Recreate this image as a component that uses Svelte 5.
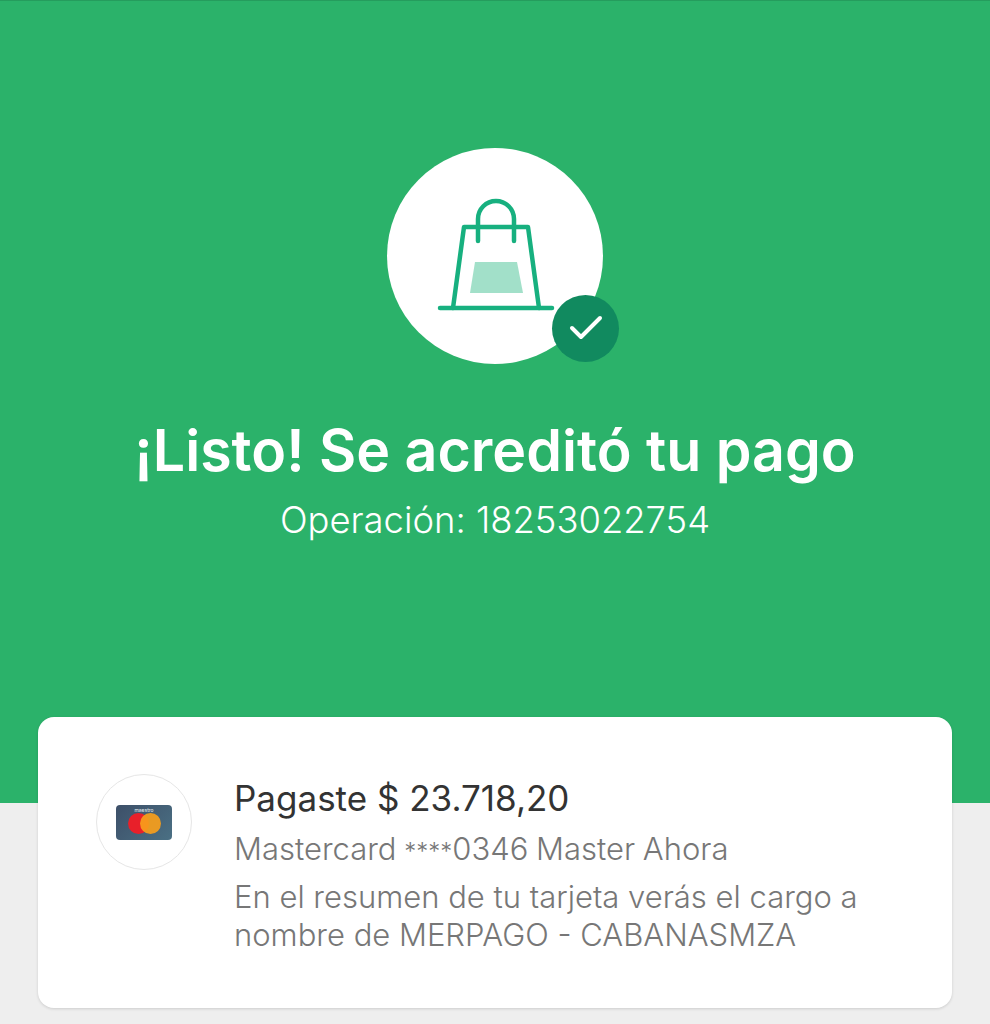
<script>
  const operation = "18253022754";
  const amount = "$ 23.718,20";
</script>

<div class="page">
  <header class="hero">
    <div class="icon-wrap">
      <div class="icon-circle">
        <svg width="216" height="216" viewBox="0 0 216 216" fill="none">
          <path class="bag-fill" d="M88 114h42l6 31H83z" />
          <path class="bag-line" d="M66 160l11-81h64l11 81" />
          <path class="bag-line" d="M53 160h112" />
          <path class="bag-line" d="M91 93V71a18 18 0 0 1 36 0v22" />
        </svg>
      </div>
      <div class="badge">
        <svg width="67" height="67" viewBox="0 0 67 67" fill="none">
          <path d="M20 33l9 9 19-19" stroke="#fff" stroke-width="4" stroke-linecap="round" stroke-linejoin="round" />
        </svg>
      </div>
    </div>
    <h1>¡Listo! Se acreditó tu pago</h1>
    <p class="operation">Operación: {operation}</p>
  </header>

  <section class="card">
    <div class="method-logo">
      <div class="mini-card">
        <span class="mini-name">maestro</span>
        <span class="red"></span>
        <span class="orange"></span>
      </div>
    </div>
    <div class="details">
      <p class="paid">Pagaste {amount}</p>
      <p class="muted first">Mastercard <span class="stars">****</span>0346 Master Ahora</p>
      <p class="muted statement">En el resumen de tu tarjeta verás el cargo a nombre de MERPAGO - CABANASMZA</p>
    </div>
  </section>
</div>

<style>
  :global(body) {
    margin: 0;
    background: #eeeeee;
  }

  .page {
    height: 1024px;
    overflow: hidden;
    background: #eeeeee;
    font-family: Inter, Lato, sans-serif;
  }

  .hero {
    height: 803px;
    box-sizing: border-box;
    padding-top: 148px;
    background: #2bb26a;
    border-top: 1px solid #259c5d;
    color: #fff;
    text-align: center;
  }

  .icon-wrap {
    position: relative;
    width: 216px;
    height: 216px;
    margin: -1px auto 0;
  }

  .icon-circle {
    width: 216px;
    height: 216px;
    border-radius: 50%;
    background: #fff;
  }

  .bag-fill {
    fill: #a2e0c9;
  }

  .bag-line {
    stroke: #17b07f;
    stroke-width: 4.5;
    stroke-linecap: round;
    stroke-linejoin: round;
  }

  .badge {
    position: absolute;
    left: 165px;
    top: 147px;
    width: 67px;
    height: 67px;
    border-radius: 50%;
    background: #118a5f;
  }

  h1 {
    margin: 50px 0 0;
    font-size: 57.3px;
    line-height: 72px;
    font-weight: 600;
  }

  .operation {
    margin: 11px 0 0;
    font-size: 36.4px;
    line-height: 46px;
    font-weight: 300;
  }

  .card {
    display: flex;
    gap: 42px;
    box-sizing: border-box;
    width: 914px;
    height: 291px;
    margin: -86px 0 0 38px;
    padding: 57px 58px;
    position: relative;
    border-radius: 16px;
    background: #fff;
    box-shadow: 0 1px 3px rgba(0, 0, 0, 0.14);
  }

  .method-logo {
    display: flex;
    flex: none;
    align-items: center;
    justify-content: center;
    box-sizing: border-box;
    width: 96px;
    height: 96px;
    border: 1px solid #e6e6e6;
    border-radius: 50%;
  }

  .mini-card {
    position: relative;
    width: 56px;
    height: 35px;
    border-radius: 4px;
    background: linear-gradient(135deg, #3d4f68, #4a7084);
  }

  .mini-name {
    position: absolute;
    left: 0;
    right: 0;
    top: 1px;
    color: #e6edf2;
    font-size: 5px;
    line-height: 8px;
    text-align: center;
  }

  .red,
  .orange {
    position: absolute;
    top: 8px;
    width: 21px;
    height: 21px;
    border-radius: 50%;
  }

  .red {
    left: 12px;
    background: #e8202a;
  }

  .orange {
    left: 24px;
    background: #f79e1b;
    opacity: 0.92;
  }

  .details {
    padding-top: 2px;
    color: #777;
  }

  p {
    margin: 0;
  }

  .paid {
    color: #333;
    font-size: 35px;
    line-height: 44px;
  }

  .muted {
    font-size: 31px;
    line-height: 38px;
    font-weight: 300;
  }

  .stars {
    font-size: 24px;
  }

  .first {
    margin-top: 10px;
    word-spacing: -1px;
  }

  .statement {
    margin-top: 7px;
    width: 660px;
  }
</style>
